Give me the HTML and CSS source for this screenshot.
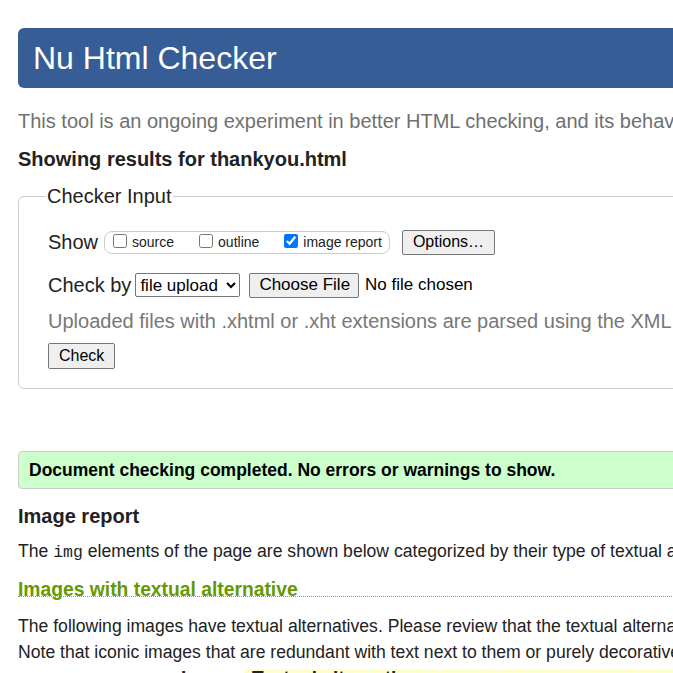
FILE: index.html
```html
<!DOCTYPE html>
<html lang="en">
<head>
<meta charset="utf-8">
<title>Showing results for thankyou.html - Nu Html Checker</title>
<link rel="stylesheet" href="styles.css">
</head>
<body>
<div class="page">
  <h1 class="banner">Nu Html Checker</h1>
  <p class="intro">This tool is an ongoing experiment in better HTML checking, and its behavior remains subject to change</p>
  <p class="showing">Showing results for thankyou.html</p>
  <fieldset class="checker">
    <legend class="legend">Checker Input</legend>
    <div class="row">
      <span class="label">Show</span>
      <span class="opts">
        <label class="opt"><input type="checkbox" class="cb">source</label>
        <label class="opt"><input type="checkbox" class="cb">outline</label>
        <label class="opt"><input type="checkbox" class="cb" checked>image report</label>
      </span>
      <button class="btn btn-options">Options…</button>
    </div>
    <div class="row">
      <span class="label">Check by</span>
      <select class="sel"><option>file upload</option></select>
      <button class="btn btn-file">Choose File</button>
      <span class="nofile">No file chosen</span>
    </div>
    <p class="note">Uploaded files with .xhtml or .xht extensions are parsed using the XML parser.</p>
    <button class="btn btn-check">Check</button>
  </fieldset>
  <p class="success">Document checking completed. No errors or warnings to show.</p>
  <h2 class="h2">Image report</h2>
  <p class="text">The <code class="code">img</code> elements of the page are shown below categorized by their type of textual alternative.</p>
  <h3 class="h3">Images with textual alternative</h3>
  <p class="text lines">The following images have textual alternatives. Please review that the textual alternatives are appropriate.<br>Note that iconic images that are redundant with text next to them or purely decorative images should have an empty textual alternative.</p>
  <table class="imgs">
    <tr><th class="th-img">Image</th><th class="th-alt">Textual alternative</th></tr>
  </table>
</div>
</body>
</html>
```

FILE: styles.css
```css
html, body {
  margin: 0;
  padding: 0;
  overflow: hidden;
  background: #fff;
}
body {
  font-family: "Liberation Sans", Arial, sans-serif;
  color: #222;
}
.page {
  width: 1100px;
  padding: 28px 0 0 18px;
}
.banner {
  margin: 0;
  height: 60px;
  line-height: 60px;
  padding-left: 15px;
  background: #365d95;
  color: #fff;
  font-weight: normal;
  font-size: 32px;
  border-radius: 6px;
}
.intro {
  margin: 21px 0 0;
  font-size: 20px;
  line-height: 24px;
  color: #707070;
  white-space: nowrap;
}
.showing {
  margin: 14px 0 0;
  font-size: 20px;
  line-height: 24px;
  font-weight: bold;
}
.checker {
  margin: 14px 0 0;
  padding: 20px 29px 19px;
  border: 1px solid #ccc;
  border-radius: 6px;
}
.legend {
  font-size: 20px;
  padding: 0 1px;
  margin-left: -2px;
}
.row {
  display: flex;
  align-items: center;
  font-size: 20px;
  height: 28px;
  margin-top: 0;
}
.row + .row { margin-top: 15px; }
.label { margin-right: 4px; }
.row:first-of-type .label { margin-right: 6px; }
.opts {
  display: flex;
  align-items: center;
  border: 1px solid #ccc;
  border-radius: 8px;
  height: 21px;
  padding: 0 7px 0 6px;
  font-size: 14px;
  margin-right: 12px;
}
.opt {
  display: flex;
  align-items: center;
  margin-right: 23px;
}
.opt:last-child { margin-right: 0; }
.cb {
  width: 14px;
  height: 14px;
  margin: 0 5px 3px 2px;
}
.btn {
  font-family: "Liberation Sans", Arial, sans-serif;
  background: #efefef;
  border: 1px solid #767676;
  border-radius: 2px;
  color: #000;
  padding: 0 10px;
}
.btn-options {
  font-size: 16px;
  height: 25px;
}
.sel {
  font-family: "Liberation Sans", Arial, sans-serif;
  font-size: 17px;
  height: 24px;
  width: 105px;
  margin-right: 9px;
  color: #000;
  border: 1px solid #767676;
  border-radius: 2px;
  background: #fff;
}
.btn-file {
  font-size: 17px;
  height: 25px;
  padding: 0 8px 0 9px;
}
.nofile {
  font-size: 17px;
  margin-left: 6px;
  color: #000;
}
.note {
  margin: 10px 0 0;
  font-size: 20px;
  line-height: 24px;
  color: #777;
  white-space: nowrap;
}
.btn-check {
  margin-top: 10px;
  font-size: 16px;
  height: 26px;
  padding: 0 10px;
}
.success {
  margin: 62px 0 0;
  height: 36px;
  line-height: 36px;
  padding-left: 10px;
  background: #ccffcc;
  border: 1px solid #ccc;
  border-radius: 4px;
  font-weight: bold;
  font-size: 17.5px;
  color: #000;
}
.h2 {
  margin: 15px 0 0;
  font-size: 20px;
  line-height: 24px;
}
.text {
  margin: 10px 0 0;
  font-size: 17.6px;
  line-height: 26px;
  white-space: nowrap;
}
.code {
  font-family: "Liberation Mono", monospace;
  font-size: 16.5px;
}
.h3 {
  margin: 18px 0 0;
  font-size: 19.3px;
  line-height: 12px;
  color: #669900;
  border-bottom: 1px dotted #999966;
  padding-bottom: 0;
}
.lines { margin-top: 16px; }
.imgs {
  border-collapse: collapse;
  margin-top: 4px;
  font-size: 19px;
}
.imgs th { padding: 0 8px; line-height: 18px; }
.th-img { width: 210px; text-align: right; }
.th-alt { background: #ffffcc; text-align: left; width: 500px; }
```
